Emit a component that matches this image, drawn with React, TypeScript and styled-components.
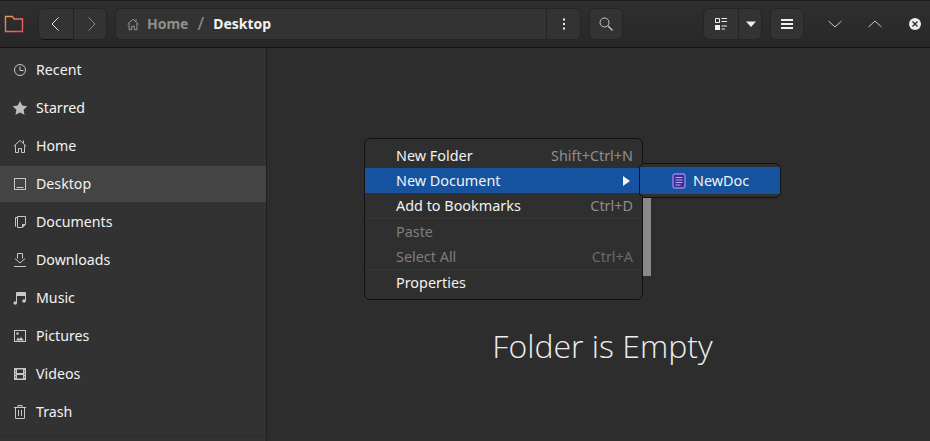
import React from "react";
import styled, { createGlobalStyle } from "styled-components";

const Global = createGlobalStyle`
  html, body { margin: 0; padding: 0; background: #2d2d2d; }
  #root { width: 930px; height: 441px; overflow: hidden; }
`;

const FONT = `"Noto Sans", "Open Sans", "Liberation Sans", sans-serif`;

const Window = styled.div`
  width: 930px;
  height: 441px;
  display: flex;
  flex-direction: column;
  background: #2d2d2d;
  color: #f2f2f2;
  font-family: ${FONT};
  font-size: 14px;
  position: relative;
  overflow: hidden;
`;

const HeaderBar = styled.header`
  height: 48px;
  flex: none;
  box-sizing: border-box;
  display: flex;
  align-items: center;
  padding: 0 3px 0 4px;
  background: linear-gradient(#2f2f2f, #282828);
  border-top: 1px solid #1c1c1c;
  border-bottom: 1px solid #141414;
`;

const AppIcon = styled.div`
  width: 20px;
  height: 20px;
  margin-right: 14px;
  display: flex;
`;

const Group = styled.div<{ $ml?: number; $grow?: boolean }>`
  display: flex;
  height: 32px;
  margin-left: ${(p) => p.$ml ?? 0}px;
  ${(p) => (p.$grow ? "flex: none; width: 466px;" : "")}
  border-radius: 6px;
  background: #333333;
  box-shadow: inset 0 0 0 1px #252525;
  overflow: hidden;
`;

const GroupButton = styled.div<{ $w: number; $divider?: boolean; $edge?: boolean }>`
  width: ${(p) => p.$w}px;
  display: flex;
  align-items: center;
  justify-content: center;
  box-sizing: border-box;
  flex: none;
  ${(p) => (p.$divider ? "border-left: 1px solid #232323;" : "")}
  ${(p) => (p.$edge ? "box-shadow: inset 0 -1px 0 #111111;" : "")}
`;

const PathField = styled.div`
  flex: 1;
  display: flex;
  align-items: center;
  padding-left: 11px;
  font-weight: 700;
  font-size: 14px;
`;

const Crumb = styled.span<{ $dim?: boolean }>`
  color: ${(p) => (p.$dim ? "#8f8f8f" : "#f2f2f2")};
  padding-bottom: 2px;
`;

const CrumbSep = styled.span`
  color: #8f8f8f;
  font-weight: 400;
  font-size: 18px;
  margin: 0 9px;
  padding-bottom: 2px;
`;

const Spacer = styled.div`
  flex: 1;
`;

const WinButton = styled.div<{ $ml: number }>`
  width: 24px;
  height: 24px;
  margin-left: ${(p) => p.$ml}px;
  display: flex;
  align-items: center;
  justify-content: center;
`;

const Body = styled.div`
  flex: 1;
  min-height: 0;
  display: flex;
`;

const Sidebar = styled.nav`
  width: 267px;
  flex: none;
  box-sizing: border-box;
  padding-top: 4px;
  background: #323232;
  border-right: 1px solid #212121;
  display: flex;
  flex-direction: column;
  gap: 2px;
`;

const SideRow = styled.div<{ $active?: boolean }>`
  height: 36px;
  flex: none;
  display: flex;
  align-items: center;
  padding-left: 12px;
  gap: 8px;
  font-size: 14.2px;
  background: ${(p) => (p.$active ? "#444444" : "transparent")};
`;

const SideLabel = styled.span`
  padding-bottom: 2px;
`;

const SideIcon = styled.svg`
  width: 16px;
  height: 16px;
  flex: none;
`;

const SideDivider = styled.div`
  height: 1px;
  flex: none;
  margin-top: 3px;
  background: #2c2c2c;
`;

const Main = styled.main`
  flex: 1;
  display: flex;
  justify-content: center;
  padding: 278px 0 0 8px;
  background: #2d2d2d;
`;

const EmptyTitle = styled.div`
  font-family: "Open Sans", "Noto Sans", sans-serif;
  font-weight: 300;
  font-size: 32px;
  line-height: 40px;
  color: #eeeeee;
`;

const ScrollThumb = styled.div`
  position: absolute;
  left: 643px;
  top: 198px;
  width: 8px;
  height: 78px;
  background: #8a8a8a;
`;

const Menu = styled.div`
  position: absolute;
  left: 364px;
  top: 138px;
  width: 279px;
  height: 162px;
  box-sizing: border-box;
  padding: 4px 0;
  background: #2f2f2f;
  border: 1px solid #111111;
  border-radius: 6px;
  display: flex;
  flex-direction: column;
  font-size: 14.4px;
`;

const MenuRow = styled.div<{ $active?: boolean; $disabled?: boolean }>`
  height: 25px;
  flex: none;
  box-sizing: border-box;
  display: flex;
  align-items: center;
  justify-content: space-between;
  padding: 0 9px 1px 31px;
  color: ${(p) => (p.$disabled ? "#7e7e7e" : "#f2f2f2")};
  background: ${(p) => (p.$active ? "#15539e" : "transparent")};
`;

const MenuSep = styled.div`
  height: 1px;
  flex: none;
  background: #383838;
`;

const Accel = styled.span<{ $disabled?: boolean }>`
  color: ${(p) => (p.$disabled ? "#6a6a6a" : "#8e8e8e")};
`;

const Arrow = styled.span`
  width: 0;
  height: 0;
  margin: 1px 3px 0 0;
  border-left: 7px solid #f2f2f2;
  border-top: 5px solid transparent;
  border-bottom: 5px solid transparent;
`;

const SubMenu = styled.div`
  position: absolute;
  left: 639px;
  top: 163px;
  width: 142px;
  height: 35px;
  box-sizing: border-box;
  padding: 3px 0;
  background: #2f2f2f;
  border: 1px solid #111111;
  border-radius: 6px;
  display: flex;
  font-size: 14.4px;
`;

const SubRow = styled.div`
  flex: 1;
  display: flex;
  align-items: center;
  padding-left: 32px;
  gap: 7px;
  background: #15539e;
  color: #f2f2f2;
`;

const SubLabel = styled.span`
  padding-bottom: 1px;
`;

const stroke = { fill: "none", stroke: "#c8c8c8", strokeWidth: 1 } as const;

const icons: Record<string, React.ReactNode> = {
  Recent: (
    <>
      <circle cx="8" cy="8" r="5.5" {...stroke} />
      <path d="M8 4.5V8.5h3.5" {...stroke} />
    </>
  ),
  Starred: <path d="M8 1l2.2 4.6 5 .7-3.6 3.5.9 5L8 12.4l-4.5 2.4.9-5L.8 6.3l5-.7z" fill="#bdbdbd" />,
  Home: (
    <>
      <path d="M1.8 8.2L8 2.5l6.2 5.7" {...stroke} />
      <path d="M3.5 7.5V14.5h3v-4h3v4h3V7.5" {...stroke} />
      <path d="M11.5 2.5v2.5" {...stroke} />
    </>
  ),
  Desktop: (
    <>
      <rect x="2.5" y="2.5" width="11" height="11" {...stroke} />
      <path d="M4.5 11.5h7" {...stroke} />
    </>
  ),
  Documents: (
    <>
      <path d="M3.5 12.5V3.5h2" {...stroke} />
      <path d="M5.5 2.5h8v8l-3 3h-5z" {...stroke} />
      <path d="M10 13.5v-3.5h3.5z" fill="#c8c8c8" />
    </>
  ),
  Downloads: (
    <>
      <path d="M5.5 6.5V1.5h5v5" {...stroke} />
      <path d="M3 6.5L8 11l5-4.5" {...stroke} />
      <path d="M2 14.5h12" {...stroke} />
    </>
  ),
  Music: (
    <>
      <path d="M4.5 13V2.5h9V11" {...stroke} />
      <path d="M4.5 5.5h9" {...stroke} />
      <path d="M4.5 3h9v2h-9z" fill="#c8c8c8" />
      <circle cx="3.2" cy="13" r="1.8" fill="#c8c8c8" />
      <circle cx="12" cy="11" r="1.8" fill="#c8c8c8" />
    </>
  ),
  Pictures: (
    <>
      <rect x="2.5" y="2.5" width="11" height="11" {...stroke} />
      <circle cx="5.5" cy="5.5" r="1.2" fill="#c8c8c8" />
      <path d="M4 12.5l2-3 1.5 1.5 1.5-2 3 3.5z" fill="#c8c8c8" />
    </>
  ),
  Videos: (
    <>
      <rect x="2" y="2" width="12" height="12" fill="#c8c8c8" />
      <rect x="5" y="3.5" width="6" height="3.5" fill="#323232" />
      <rect x="5" y="9" width="6" height="3.5" fill="#323232" />
      <path d="M3 5h1M3 8h1M3 11h1M12 5h1M12 8h1M12 11h1" stroke="#323232" strokeWidth="1" />
    </>
  ),
  Trash: (
    <>
      <path d="M2 3.5h12M6 3V1.5h4V3" {...stroke} />
      <path d="M3.5 3.5v11h9v-11M6.5 6v6M9.5 6v6" {...stroke} />
    </>
  ),
};

const places = ["Recent", "Starred", "Home", "Desktop", "Documents", "Downloads", "Music", "Pictures", "Videos", "Trash"];

const light = { fill: "none", stroke: "#e4e4e4", strokeWidth: 1 } as const;

export default function App() {
  return (
    <Window>
      <Global />
      <HeaderBar>
        <AppIcon>
          <svg width="20" height="20" viewBox="0 0 20 20">
            <defs>
              <linearGradient id="folderStroke" x1="0" y1="0" x2="1" y2="1">
                <stop offset="0" stopColor="#f0935c" />
                <stop offset="1" stopColor="#f24c5e" />
              </linearGradient>
            </defs>
            <path d="M1.5 17.5V2.5h7L10 5h8.5v12.5z" fill="none" stroke="url(#folderStroke)" strokeWidth="1.4" />
          </svg>
        </AppIcon>
        <Group>
          <GroupButton $w={35} $edge>
            <svg width="16" height="16" viewBox="0 0 16 16"><path d="M10.5 1.5L4 8l6.5 6.5" {...light} /></svg>
          </GroupButton>
          <GroupButton $w={34} $divider>
            <svg width="16" height="16" viewBox="0 0 16 16"><path d="M5.5 1.5L12 8l-6.5 6.5" fill="none" stroke="#8a8a8a" strokeWidth="1" /></svg>
          </GroupButton>
        </Group>
        <Group $ml={8} $grow>
          <PathField>
            <svg width="14" height="14" viewBox="0 0 16 16" style={{ marginRight: 7 }}>
              <path d="M1.8 8.2L8 2.5l6.2 5.7M3.5 7.5V14.5h3v-4h3v4h3V7.5M11.5 2.5v2.5" fill="none" stroke="#9a9a9a" strokeWidth="1.1" />
            </svg>
            <Crumb $dim>Home</Crumb>
            <CrumbSep>/</CrumbSep>
            <Crumb>Desktop</Crumb>
          </PathField>
          <GroupButton $w={35} $divider>
            <svg width="16" height="16" viewBox="0 0 16 16"><path d="M7 2.5h2v2H7zM7 7h2v2H7zM7 11.5h2v2H7z" fill="#f0f0f0" /></svg>
          </GroupButton>
        </Group>
        <Group $ml={8}>
          <GroupButton $w={34}>
            <svg width="14" height="14" viewBox="0 0 14 14">
              <circle cx="5.5" cy="5.5" r="4.5" fill="none" stroke="#c8c8c8" strokeWidth="1" />
              <path d="M9 9l4.5 4.5" stroke="#c8c8c8" strokeWidth="1.3" />
            </svg>
          </GroupButton>
        </Group>
        <Spacer />
        <Group>
          <GroupButton $w={35}>
            <svg width="14" height="14" viewBox="0 0 14 14">
              <path d="M1.5 1.5h4v4h-4z" fill="none" stroke="#f0f0f0" />
              <path d="M1 8h5v5H1z" fill="#f0f0f0" />
              <path d="M7.5 1.5H13M7.5 4.5H13M7.5 9H13M7.5 12H11" stroke="#f0f0f0" />
            </svg>
          </GroupButton>
          <GroupButton $w={24} $divider>
            <svg width="12" height="8" viewBox="0 0 12 8"><path d="M1 1.5h10L6 7z" fill="#f0f0f0" /></svg>
          </GroupButton>
        </Group>
        <Group $ml={8}>
          <GroupButton $w={34}>
            <svg width="14" height="12" viewBox="0 0 14 12"><path d="M1 1h12v2H1zM1 5h12v2H1zM1 9h12v2H1z" fill="#f0f0f0" /></svg>
          </GroupButton>
        </Group>
        <WinButton $ml={19}>
          <svg width="14" height="14" viewBox="0 0 14 14"><path d="M0.5 4L7 10l6.5-6" fill="none" stroke="#c8c8c8" strokeWidth="1" /></svg>
        </WinButton>
        <WinButton $ml={16}>
          <svg width="14" height="14" viewBox="0 0 14 14"><path d="M0.5 10L7 4l6.5 6" fill="none" stroke="#c8c8c8" strokeWidth="1" /></svg>
        </WinButton>
        <WinButton $ml={16}>
          <svg width="14" height="14" viewBox="0 0 14 14">
            <circle cx="7" cy="7" r="6" fill="#ececec" />
            <path d="M4.5 4.5l5 5M9.5 4.5l-5 5" stroke="#2a2a2a" strokeWidth="1.4" />
          </svg>
        </WinButton>
      </HeaderBar>
      <Body>
        <Sidebar>
          {places.map((p) => (
            <SideRow key={p} $active={p === "Desktop"}>
              <SideIcon viewBox="0 0 16 16">{icons[p]}</SideIcon>
              <SideLabel>{p}</SideLabel>
            </SideRow>
          ))}
          <SideDivider />
        </Sidebar>
        <Main>
          <EmptyTitle>Folder is Empty</EmptyTitle>
        </Main>
      </Body>
      <ScrollThumb />
      <Menu>
        <MenuRow>
          <span>New Folder</span>
          <Accel>Shift+Ctrl+N</Accel>
        </MenuRow>
        <MenuRow $active>
          <span>New Document</span>
          <Arrow />
        </MenuRow>
        <MenuRow>
          <span>Add to Bookmarks</span>
          <Accel>Ctrl+D</Accel>
        </MenuRow>
        <MenuSep />
        <MenuRow $disabled>
          <span>Paste</span>
        </MenuRow>
        <MenuRow $disabled>
          <span>Select All</span>
          <Accel $disabled>Ctrl+A</Accel>
        </MenuRow>
        <MenuSep />
        <MenuRow>
          <span>Properties</span>
        </MenuRow>
      </Menu>
      <SubMenu>
        <SubRow>
          <svg width="14" height="16" viewBox="0 0 14 16">
            <rect x="1" y="1" width="12" height="14" rx="2" fill="#3a2f8f" stroke="#9a7ff0" strokeWidth="1.4" />
            <path d="M3.5 4.5h7M3.5 7h7M3.5 9.5h7M3.5 12h5" stroke="#b9a6f7" strokeWidth="1.1" />
          </svg>
          <SubLabel>NewDoc</SubLabel>
        </SubRow>
      </SubMenu>
    </Window>
  );
}
